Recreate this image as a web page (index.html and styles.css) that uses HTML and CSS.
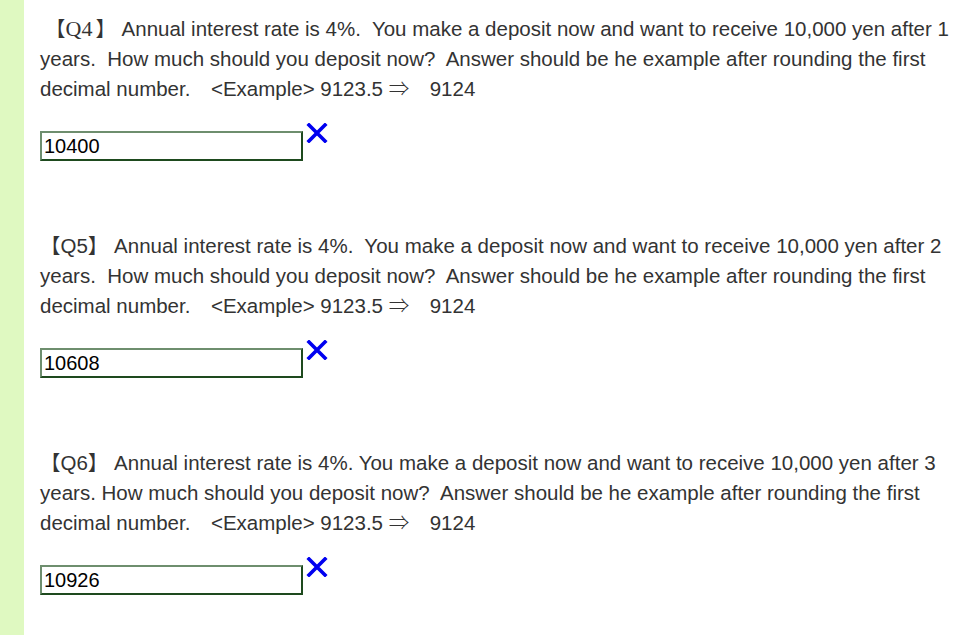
FILE: index.html
```html
<!DOCTYPE html>
<html>
<head>
<meta charset="utf-8">
<link rel="stylesheet" href="styles.css">
</head>
<body>
<div class="page">
  <div class="strip"></div>
  <main class="content">
    <section class="q">
      <p class="qtext"><span class="cjk open-wide">【</span><span class="qid-serif">Q4</span><span class="cjk close-wide">】</span> Annual interest rate is 4%.&nbsp; You make a deposit now and want to receive 10,000 yen after 1 years.&nbsp; How much should you deposit now?&nbsp; Answer should be he example after rounding the first decimal number.<span class="cjk">　</span>&lt;Example&gt; 9123.5 <span class="cjk">⇒　</span>9124</p>
      <div class="answer">
        <input class="box" type="text" value="10400">
        <svg class="mark" width="22" height="20" viewBox="0 0 22 20"><path d="M3 2 L19 18 M19 2 L3 18" stroke="#0000f0" stroke-width="3.6" stroke-linecap="square" fill="none"/></svg>
      </div>
    </section>
    <section class="q">
      <p class="qtext"><span class="cjk">【</span>Q5<span class="cjk">】</span> Annual interest rate is 4%.&nbsp; You make a deposit now and want to receive 10,000 yen after 2 years.&nbsp; How much should you deposit now?&nbsp; Answer should be he example after rounding the first decimal number.<span class="cjk">　</span>&lt;Example&gt; 9123.5 <span class="cjk">⇒　</span>9124</p>
      <div class="answer">
        <input class="box" type="text" value="10608">
        <svg class="mark" width="22" height="20" viewBox="0 0 22 20"><path d="M3 2 L19 18 M19 2 L3 18" stroke="#0000f0" stroke-width="3.6" stroke-linecap="square" fill="none"/></svg>
      </div>
    </section>
    <section class="q">
      <p class="qtext"><span class="cjk">【</span>Q6<span class="cjk">】</span> Annual interest rate is 4%. You make a deposit now and want to receive 10,000 yen after 3 years. How much should you deposit now?&nbsp; Answer should be he example after rounding the first decimal number.<span class="cjk">　</span>&lt;Example&gt; 9123.5 <span class="cjk">⇒　</span>9124</p>
      <div class="answer">
        <input class="box" type="text" value="10926">
        <svg class="mark" width="22" height="20" viewBox="0 0 22 20"><path d="M3 2 L19 18 M19 2 L3 18" stroke="#0000f0" stroke-width="3.6" stroke-linecap="square" fill="none"/></svg>
      </div>
    </section>
  </main>
</div>
</body>
</html>
```

FILE: styles.css
```css
html, body {
  margin: 0;
  padding: 0;
  background: #ffffff;
}
.page {
  display: flex;
  min-height: 635px;
}
.strip {
  width: 24px;
  flex: none;
  background: #dff9c1;
}
.content {
  flex: 1;
  padding: 14px 8px 0 16px;
  font-family: "Liberation Sans", Arial, "Noto Sans CJK JP", sans-serif;
  font-size: 20.5px;
  line-height: 30px;
  color: #333333;
}
.q {
  padding-bottom: 70px;
}
.qtext {
  margin: 0;
}
.cjk {
  font-family: "Noto Sans CJK JP", sans-serif;
  font-weight: 300;
  line-height: 1;
}
.open-wide {
  padding-left: 5px;
}
.close-wide {
  padding-left: 3px;
}
.qid-serif {
  font-family: "Liberation Serif", "Times New Roman", serif;
  font-size: 22px;
  line-height: 1;
}
.answer {
  display: flex;
  align-items: flex-start;
  margin-top: 27px;
}
.box {
  box-sizing: border-box;
  width: 263px;
  height: 30px;
  margin: 0;
  padding: 0 2px;
  border: 2px solid;
  border-color: #6e8e6e #1e4a1e #1e4a1e #6e8e6e;
  font-family: "Liberation Sans", Arial, sans-serif;
  font-size: 20px;
  color: #000000;
  background: #ffffff;
}
.mark {
  display: block;
  margin: -8px 0 0 3px;
}
```
